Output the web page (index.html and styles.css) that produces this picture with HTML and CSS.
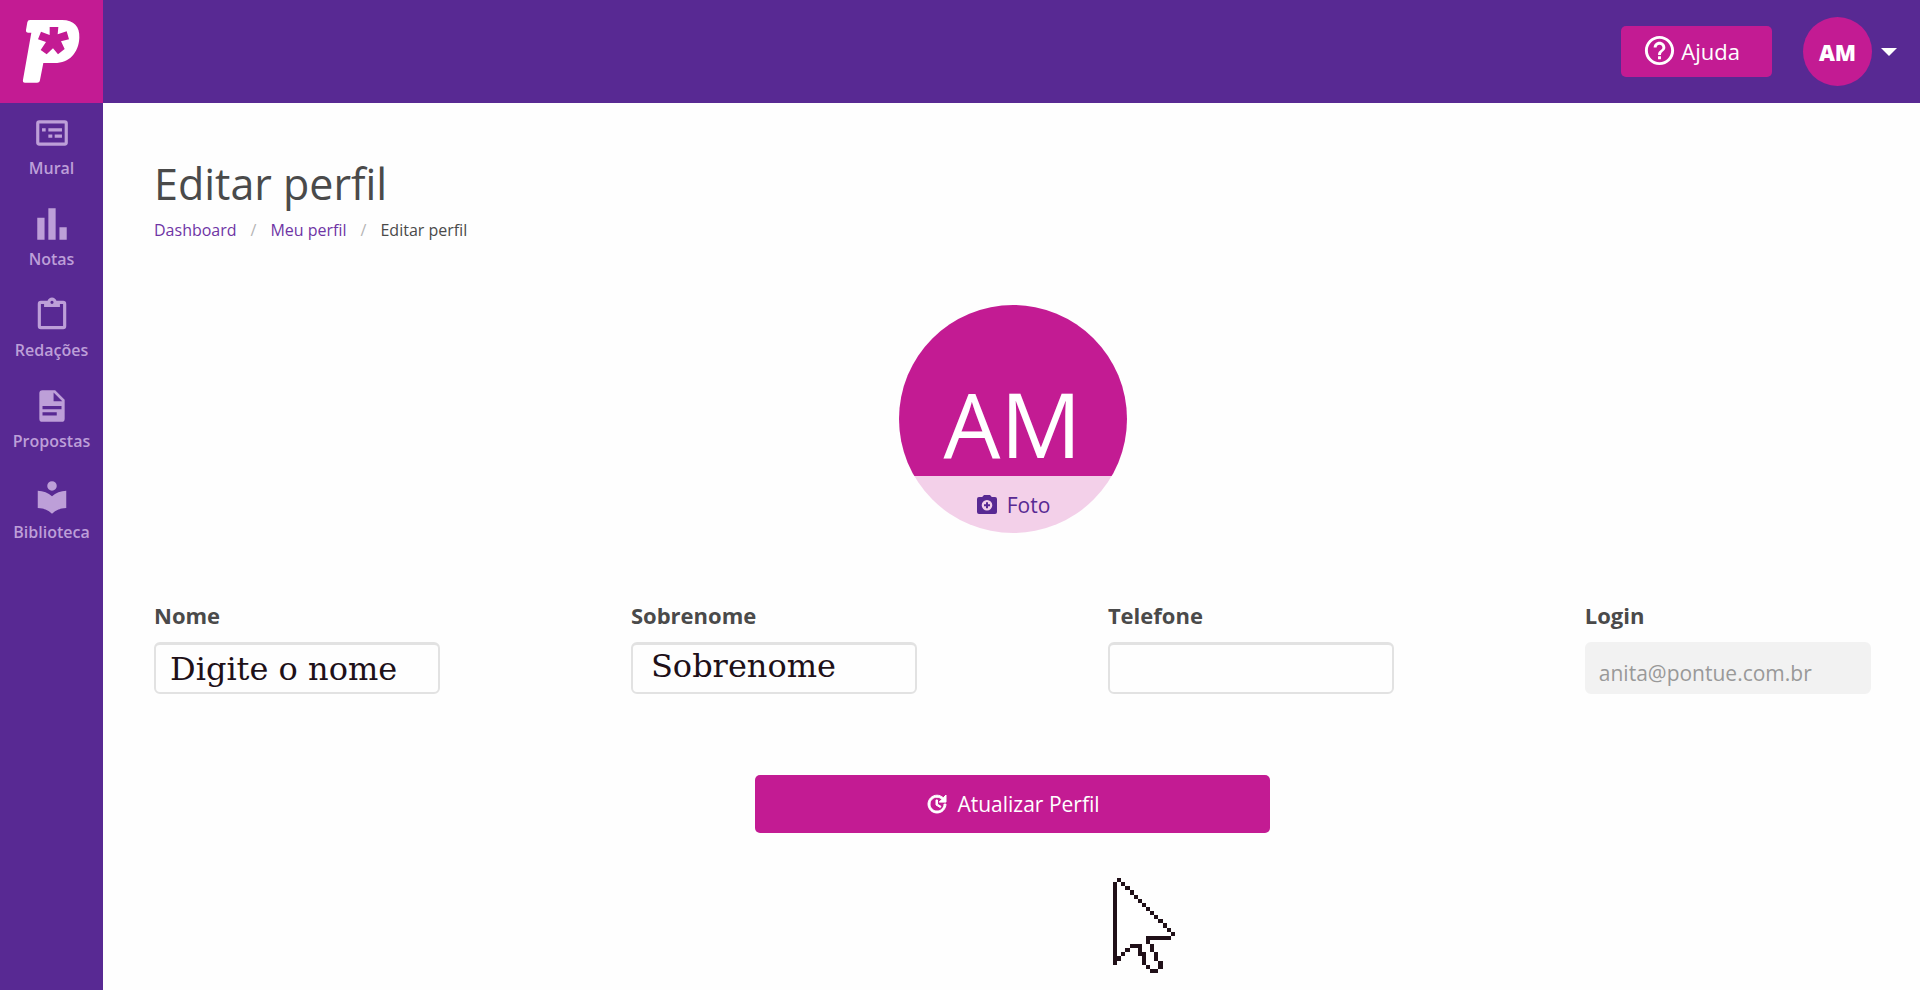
FILE: index.html
```html
<!DOCTYPE html>
<html lang="pt-BR">
<head>
<meta charset="utf-8">
<meta name="viewport" content="width=device-width, initial-scale=1">
<title>Editar perfil</title>
<link rel="stylesheet" href="styles.css">
</head>
<body>
<div class="app">
  <aside class="sidebar">
    <a class="logo" href="#" aria-label="Início">
      <svg viewBox="0 0 309 309" aria-hidden="true">
        <path fill="#fff" d="M90 60H186C222 60 240 80 238 113C236 158 208 189 164 189H130L120 240Q119 248 111 248H75Q67 248 69 239L94 98H85Q77 98 78 90L82 67Q83 60 90 60Z"/>
        <path fill="#c31b93" d="M149 81H175L173 103L200 94L207 118L183 124L194 147L174 163L159 145L140 163L122 150L138 126L114 118L123 95L149 105Z"/>
      </svg>
    </a>
    <nav class="menu">
      <a class="menu-item" href="#">
        <svg class="menu-icon" viewBox="0 0 24 24" aria-hidden="true"><path d="M4 4h16a2 2 0 0 1 2 2v12a2 2 0 0 1-2 2H4a2 2 0 0 1-2-2V6a2 2 0 0 1 2-2zm0 2v12h16V6zm1.700 3h2.300v2H5.700zm4 0h8.600v2H9.700zm0 4h2.500v2H9.700zm4 0h4.600v2h-4.600z"/></svg>
        Mural
      </a>
      <a class="menu-item" href="#">
        <svg class="menu-icon" viewBox="0 0 24 24" aria-hidden="true"><path d="M2.700 22V8h4.600v14zm7 0V2h4.600v20zm7 0v-8h4.600v8z"/></svg>
        Notas
      </a>
      <a class="menu-item" href="#">
        <svg class="menu-icon" viewBox="0 0 24 24" aria-hidden="true"><path d="M19 3h-4.180C14.400 1.840 13.300 1 12 1s-2.400.840-2.820 2H5a2 2 0 0 0-2 2v14a2 2 0 0 0 2 2h14a2 2 0 0 0 2-2V5a2 2 0 0 0-2-2m-7 0a1 1 0 0 1 1 1 1 1 0 0 1-1 1 1 1 0 0 1-1-1 1 1 0 0 1 1-1M7 7h10V5h2v14H5V5h2z"/></svg>
        Redações
      </a>
      <a class="menu-item" href="#">
        <svg class="menu-icon" viewBox="0 0 24 24" aria-hidden="true"><path d="M13 9h5.500L13 3.500zM6 2h8l6 6v12a2 2 0 0 1-2 2H6a2 2 0 0 1-2-2V4a2 2 0 0 1 2-2m9 16v-2H6v2zm3-4v-2H6v2z"/></svg>
        Propostas
      </a>
      <a class="menu-item" href="#">
        <svg class="menu-icon" viewBox="0 0 24 24" aria-hidden="true"><path d="M12 8a3 3 0 0 0 3-3 3 3 0 0 0-3-3 3 3 0 0 0-3 3 3 3 0 0 0 3 3m0 3.540C9.640 9.350 6.500 8 3 8v11c3.500 0 6.640 1.350 9 3.540 2.360-2.190 5.500-3.540 9-3.540V8c-3.500 0-6.640 1.350-9 3.540z"/></svg>
        Biblioteca
      </a>
    </nav>
  </aside>

  <div class="page">
    <header class="topbar">
      <button class="help" type="button">
        <svg class="help-icon" viewBox="0 0 24 24" aria-hidden="true"><path d="M11 18h2v-2h-2v2zm1-16C6.480 2 2 6.480 2 12s4.480 10 10 10 10-4.480 10-10S17.520 2 12 2zm0 18c-4.410 0-8-3.590-8-8s3.590-8 8-8 8 3.590 8 8-3.590 8-8 8zm0-14c-2.210 0-4 1.790-4 4h2c0-1.100.900-2 2-2s2 .900 2 2c0 2-3 1.750-3 5h2c0-2.250 3-2.500 3-5 0-2.210-1.790-4-4-4z"/></svg>
        Ajuda
      </button>
      <button class="account" type="button">
        <span class="account-avatar">AM</span>
        <span class="caret"></span>
      </button>
    </header>

    <main class="content">
      <h1 class="title">Editar perfil</h1>
      <nav class="breadcrumb" aria-label="Navegação">
        <a href="#">Dashboard</a>
        <span class="slash">/</span>
        <a href="#">Meu perfil</a>
        <span class="slash">/</span>
        <span>Editar perfil</span>
      </nav>

      <form class="profile">
        <div class="photo">
          <span class="photo-initials">AM</span>
          <button class="photo-button" type="button">
            <svg class="photo-icon" viewBox="0 0 24 24" aria-hidden="true"><path fill-rule="evenodd" d="M9 2h6l1.800 2H20a2 2 0 0 1 2 2v13a2 2 0 0 1-2 2H4a2 2 0 0 1-2-2V6a2 2 0 0 1 2-2h3.200zM12 7a5.300 5.300 0 1 0 0 10.600A5.300 5.300 0 0 0 12 7zm-1 2.300h2v2h2v2h-2v2h-2v-2H9v-2h2z"/></svg>
            Foto
          </button>
        </div>

        <div class="fields">
          <div class="field">
            <label for="nome">Nome</label>
            <input class="input typed" id="nome" type="text" value="Digite o nome">
          </div>
          <div class="field">
            <label for="sobrenome">Sobrenome</label>
            <input class="input typed typed-surname" id="sobrenome" type="text" value="Sobrenome">
          </div>
          <div class="field">
            <label for="telefone">Telefone</label>
            <input class="input" id="telefone" type="tel">
          </div>
          <div class="field">
            <label for="login">Login</label>
            <input class="input" id="login" type="text" value="anita@pontue.com.br" disabled>
          </div>
        </div>

        <button class="submit" type="button">
          <svg class="submit-icon" viewBox="0 0 24 24" aria-hidden="true"><path d="M21 10.120h-6.780l2.740-2.820c-2.730-2.700-7.150-2.800-9.880-.100-2.730 2.710-2.730 7.080 0 9.790s7.150 2.710 9.880 0C18.320 15.650 19 14.080 19 12.100h2c0 1.980-.880 4.550-2.640 6.290-3.510 3.480-9.210 3.480-12.720 0-3.500-3.470-3.530-9.110-.020-12.580s9.140-3.470 12.650 0L21 3v7.120zM12.500 8v4.250l3.500 2.080-.720 1.210L11 13V8h1.500z"/></svg>
          Atualizar Perfil
        </button>
      </form>
    </main>
  </div>
</div>

<svg class="pointer" viewBox="0 0 15 23" aria-hidden="true">
  <path fill="#fff" d="M1 1h1L14 13v1H8v2L10 21H9L7 17H4L1 19z"/>
  <path fill="#201018" d="M1 0h1v1H1zM2 1h1v1H2zM3 2h1v1H3zM4 3h1v1H4zM5 4h1v1H5zM6 5h1v1H6zM7 6h1v1H7zM8 7h1v1H8zM9 8h1v1H9zM10 9h1v1H10zM11 10h1v1H11zM12 11h1v1H12zM13 12h1v1H13zM14 13h1v1H14zM8 14h6v1H9v1H8zM0 1h1v20H0zM1 19h1v1H1zM2 18h1v1H2zM3 17h1v1H3zM4 16h3v2h1v3H7v-2H6v-2H4zM8 21h1v1H8zM9 22h2v1H9zM11 20h1v2H11zM10 18h1v2H10zM9 16h1v2H9z"/>
</svg>
</body>
</html>
```

FILE: styles.css
```css
* {
  box-sizing: border-box;
}

body {
  margin: 0;
  background: #fefefe;
  color: #4a4a4a;
  font-family: "Open Sans", "Noto Sans", sans-serif;
}

a {
  color: inherit;
  text-decoration: none;
}

button,
input {
  margin: 0;
  border: 0;
  font: inherit;
}

button {
  cursor: pointer;
}

svg {
  display: block;
  flex: none;
  fill: currentColor;
}

.app {
  display: grid;
  grid-template-columns: 103px 1fr;
  min-height: 100vh;
}

.sidebar {
  background: #582993;
}

.logo {
  display: block;
  height: 103px;
  background: #c31b93;
}

.logo svg {
  width: 100%;
  height: 100%;
}

.menu {
  display: flex;
  flex-direction: column;
  gap: 7px;
  padding-top: 11px;
}

.menu-item {
  display: flex;
  flex-direction: column;
  align-items: center;
  gap: 4px;
  height: 84px;
  color: #bd9fd8;
  font-size: 16px;
  font-weight: 600;
  line-height: 24px;
}

.menu-icon {
  width: 38px;
  height: 38px;
}

.topbar {
  display: flex;
  align-items: center;
  justify-content: flex-end;
  gap: 31px;
  height: 103px;
  padding-right: 23px;
  background: #582993;
}

.help {
  display: flex;
  align-items: center;
  gap: 4px;
  height: 51px;
  padding: 0 32px 2px 21px;
  border-radius: 5px;
  background: #c31b93;
  color: #fff;
  font-size: 22px;
}

.help-icon {
  width: 35px;
  height: 35px;
}

.account {
  display: flex;
  align-items: center;
  gap: 9px;
  padding: 0;
  background: none;
  color: #fff;
}

.account-avatar {
  display: grid;
  place-items: center;
  width: 69px;
  height: 69px;
  border-radius: 50%;
  background: #c31b93;
  font-size: 22px;
  font-weight: 800;
}

.caret {
  border: 8px solid transparent;
  border-top-color: #fff;
  border-bottom: 0;
}

.content {
  padding: 51px 49px 48px 51px;
}

.title {
  margin: 0;
  font-size: 43px;
  font-weight: 400;
  line-height: 60px;
}

.breadcrumb {
  display: flex;
  gap: 14px;
  font-size: 16px;
  line-height: 32px;
}

.breadcrumb a {
  color: #6f35a5;
}

.slash {
  color: #b5b5b5;
}

.profile {
  display: flex;
  flex-direction: column;
  align-items: center;
  padding-top: 59px;
}

.photo {
  display: flex;
  flex-direction: column;
  justify-content: flex-end;
  width: 228px;
  height: 228px;
  border-radius: 50%;
  background: linear-gradient(#c31b93 75%, #f3d0e9 75%);
}

.photo-initials {
  color: #fff;
  font-size: 90px;
  line-height: 106px;
  text-align: center;
}

.photo-button {
  display: flex;
  align-items: center;
  justify-content: center;
  gap: 8px;
  height: 57px;
  background: none;
  color: #582993;
  font-size: 21px;
}

.photo-icon {
  width: 24px;
  height: 24px;
}

.fields {
  display: flex;
  justify-content: space-between;
  align-self: stretch;
  padding-top: 67px;
}

.field {
  display: flex;
  flex: 0 0 calc(100% / 6);
  flex-direction: column;
  gap: 12px;
  min-width: 0;
}

.field label {
  font-size: 22px;
  font-weight: 700;
  line-height: 30px;
}

.input {
  width: 100%;
  height: 52px;
  padding: 8px 12px 0;
  border: 2px solid #e2e2e2;
  border-top-width: 3px;
  border-radius: 6px;
  background: #fefefe;
  color: #201018;
  font-size: 21px;
}

.input:disabled {
  border-color: #f2f2f2;
  background: #f2f2f2;
  color: #999;
}

.typed {
  padding: 0 14px;
  font-family: "DejaVu Serif", serif;
  font-size: 32px;
}

.typed-surname {
  padding: 0 18px 5px;
}

.submit {
  display: flex;
  align-items: center;
  justify-content: center;
  gap: 8px;
  width: 30%;
  height: 58px;
  margin-top: 81px;
  border-radius: 5px;
  background: #c31b93;
  color: #fff;
  font-size: 21px;
}

.submit-icon {
  width: 24px;
  height: 24px;
  stroke: currentColor;
}

.pointer {
  position: absolute;
  top: 878px;
  left: 1113px;
  width: 62px;
  height: 95px;
  shape-rendering: crispEdges;
}
```
